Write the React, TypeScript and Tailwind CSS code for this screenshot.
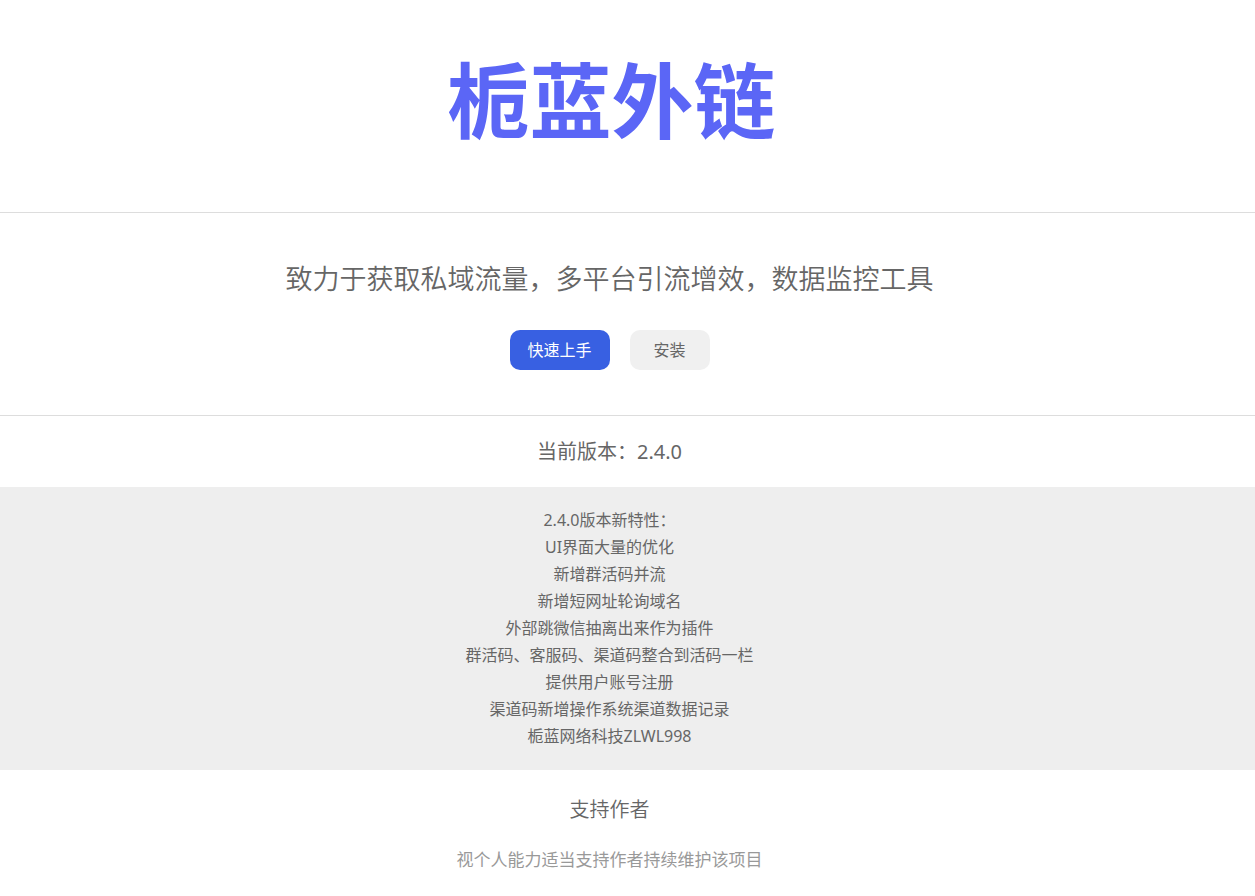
import React from 'react'

const features = [
  '2.4.0版本新特性：',
  'UI界面大量的优化',
  '新增群活码并流',
  '新增短网址轮询域名',
  '外部跳微信抽离出来作为插件',
  '群活码、客服码、渠道码整合到活码一栏',
  '提供用户账号注册',
  '渠道码新增操作系统渠道数据记录',
  '栀蓝网络科技ZLWL998',
]

function Header() {
  return (
    <header className="border-b border-[#dddddd] pt-[54px] pb-[66px]">
      <div className="pr-8 text-center">
        <h1 className="text-[82px] leading-[92px] font-bold text-[#5b66f6]">栀蓝外链</h1>
      </div>
    </header>
  )
}

function Hero() {
  return (
    <section className="border-b border-[#dddddd] pt-11 pb-[45px]">
      <div className="flex flex-col items-center pr-9">
        <h2 className="text-[27px] leading-[43px] font-[350]">致力于获取私域流量，多平台引流增效，数据监控工具</h2>
        <div className="mt-[30px] flex gap-5">
          <button type="button" className="h-10 w-25 rounded-[10px] bg-[#3860e2] text-base text-white">
            快速上手
          </button>
          <button type="button" className="h-10 w-20 rounded-[10px] bg-[#f0f0f0] text-base text-[#666666]">
            安装
          </button>
        </div>
      </div>
    </section>
  )
}

function Release() {
  return (
    <section className="text-center">
      <h3 className="py-5 pr-9 text-xl leading-[31px]">当前版本：2.4.0</h3>
      <div className="bg-[#eeeeee] py-5 pr-9">
        {features.map((feature) => (
          <p key={feature} className="text-base leading-[27px]">{feature}</p>
        ))}
      </div>
    </section>
  )
}

function Support() {
  return (
    <section className="pt-6 pr-9 text-center">
      <h3 className="text-xl leading-8 font-[350]">支持作者</h3>
      <p className="mt-5 text-[17px] leading-7 text-[#999999]">视个人能力适当支持作者持续维护该项目</p>
    </section>
  )
}

export default function App() {
  return (
    <main className="bg-white font-['Noto_Sans','Noto_Sans_CJK_SC',sans-serif] text-[#666666]" lang="zh-CN">
      <Header />
      <Hero />
      <Release />
      <Support />
    </main>
  )
}
